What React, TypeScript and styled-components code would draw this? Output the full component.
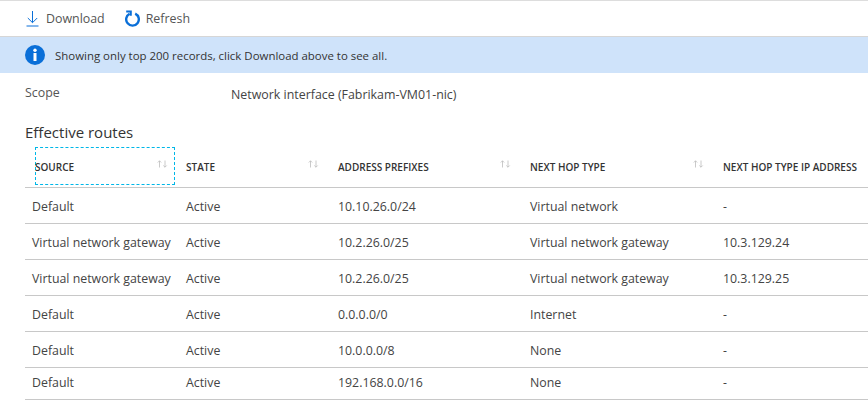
import React from "react";
import styled, { createGlobalStyle } from "styled-components";

const Global = createGlobalStyle`
  html, body { margin: 0; padding: 0; background: #fff; overflow: hidden; }
  body { font-family: "Open Sans", "Noto Sans", sans-serif; color: #3c3c3c; }
`;

const Page = styled.div`
  width: 868px;
  height: 408px;
  overflow: hidden;
  border-top: 1px solid #ddd;
  box-sizing: border-box;
`;

const Toolbar = styled.div`
  height: 35px;
  display: flex;
  align-items: center;
  padding-left: 26px;
  gap: 20px;
  border-bottom: 1px solid #d6d6d6;
`;

const ToolButton = styled.div<{ $gap: number }>`
  display: flex;
  align-items: center;
  gap: ${(p) => p.$gap}px;
  font-size: 12.4px;
  color: #555;
`;

const Banner = styled.div`
  height: 36px;
  background: #cfe3fa;
  display: flex;
  align-items: center;
  padding-left: 25px;
  gap: 10px;
  font-size: 11.45px;
  color: #333;
`;

const ScopeRow = styled.div`
  display: flex;
  padding: 12px 0 0 25px;
  height: 28px;
  font-size: 12.4px;
  line-height: 16px;
`;

const ScopeLabel = styled.div`
  width: 206px;
  color: #555;
`;

const ScopeValue = styled.div`
  padding-top: 2px;
  color: #444;
`;

const Heading = styled.h2`
  margin: 9px 0 0 25px;
  font-size: 15px;
  font-weight: 400;
  line-height: 20px;
  color: #333;
`;

const Table = styled.table`
  margin: 5px 0 0 25px;
  border-collapse: separate;
  border-spacing: 0;
  table-layout: fixed;
  width: 900px;
`;

const HeadCell = styled.th`
  height: 41px;
  border-bottom: 1px solid #c8c8c8;
  padding: 0 0 2px 7px;
  text-align: left;
  vertical-align: middle;
  box-sizing: border-box;
`;

const HeadInner = styled.div<{ $focused?: boolean }>`
  display: flex;
  align-items: center;
  justify-content: space-between;
  height: 38px;
  width: ${(p) => (p.$focused ? "140px" : "calc(100% - 5px)")};
  box-sizing: border-box;
  margin-left: ${(p) => (p.$focused ? "3px" : "0")};
  border: 1px dashed ${(p) => (p.$focused ? "#00b7e8" : "transparent")};
  font-size: 10px;
  font-weight: 600;
  color: #333;
  white-space: nowrap;
`;

const HeadLabel = styled.span`
  margin-left: -1px;
  padding-top: 1px;
`;

const SortIcon = styled.svg`
  width: 11px;
  height: 8px;
  margin: 0 6px 5px 0;
  flex: none;
`;

const Row = styled.tr<{ $short?: boolean }>`
  height: ${(p) => (p.$short ? "32px" : "36px")};
`;

const Cell = styled.td<{ $short?: boolean }>`
  border-bottom: 1px solid #c8c8c8;
  padding: ${(p) => (p.$short ? "0 0 2px 7px" : "2px 0 0 7px")};
  font-size: 12.35px;
  color: #444;
  white-space: nowrap;
  box-sizing: border-box;
`;

const Sort = () => (
  <SortIcon viewBox="0 0 11 8" fill="none" stroke="#bdbdbd" strokeWidth="0.8">
    <path d="M2.5 7.5V.8M.8 2.5 2.5.8l1.7 1.7M8 .5v6.7M6.3 5.500 8 7.2l1.7-1.7" />
  </SortIcon>
);

const columns = ["SOURCE", "STATE", "ADDRESS PREFIXES", "NEXT HOP TYPE", "NEXT HOP TYPE IP ADDRESS"];
const widths = [154, 152, 192, 193, 209];
const rows = [
  ["Default", "Active", "10.10.26.0/24", "Virtual network", "-"],
  ["Virtual network gateway", "Active", "10.2.26.0/25", "Virtual network gateway", "10.3.129.24"],
  ["Virtual network gateway", "Active", "10.2.26.0/25", "Virtual network gateway", "10.3.129.25"],
  ["Default", "Active", "0.0.0.0/0", "Internet", "-"],
  ["Default", "Active", "10.0.0.0/8", "None", "-"],
  ["Default", "Active", "192.168.0.0/16", "None", "-"],
];

export default function App() {
  return (
    <Page>
      <Global />
      <Toolbar>
        <ToolButton $gap={7}>
          <svg width="13" height="16" viewBox="0 0 13 16" fill="none" stroke="#0a6fd8" strokeWidth="1">
            <path d="M6.5 0v11.5M1.8 7l4.7 4.7L11.200 7M.5 15h12" />
          </svg>
          Download
        </ToolButton>
        <ToolButton $gap={6}>
          <svg width="15" height="17" viewBox="0 0 15 17" fill="none" stroke="#0a6fd8">
            <path d="M4.600 3.700a6.300 6.300 0 1 0 5.600-.1" strokeWidth="2.400" />
            <path d="M1.200 1.400h4.600v4.400" strokeWidth="2" />
          </svg>
          Refresh
        </ToolButton>
      </Toolbar>
      <Banner>
        <svg width="20" height="20" viewBox="0 0 20 20">
          <circle cx="10" cy="10" r="10" fill="#0a6fd8" />
          <circle cx="10" cy="5.300" r="1.700" fill="#fff" />
          <rect x="8.500" y="8" width="3" height="8" fill="#fff" />
        </svg>
        Showing only top 200 records, click Download above to see all.
      </Banner>
      <ScopeRow>
        <ScopeLabel>Scope</ScopeLabel>
        <ScopeValue>Network interface (Fabrikam-VM01-nic)</ScopeValue>
      </ScopeRow>
      <Heading>Effective routes</Heading>
      <Table>
        <colgroup>
          {widths.map((w, i) => (
            <col key={i} style={{ width: w }} />
          ))}
        </colgroup>
        <thead>
          <tr>
            {columns.map((c, i) => (
              <HeadCell key={c}>
                <HeadInner $focused={i === 0}>
                  <HeadLabel>{c}</HeadLabel>
                  {i < 4 && <Sort />}
                </HeadInner>
              </HeadCell>
            ))}
          </tr>
        </thead>
        <tbody>
          {rows.map((r, i) => (
            <Row key={i} $short={i === 5}>
              {r.map((v, j) => (
                <Cell key={j} $short={i === 5}>{v}</Cell>
              ))}
            </Row>
          ))}
        </tbody>
      </Table>
    </Page>
  );
}
